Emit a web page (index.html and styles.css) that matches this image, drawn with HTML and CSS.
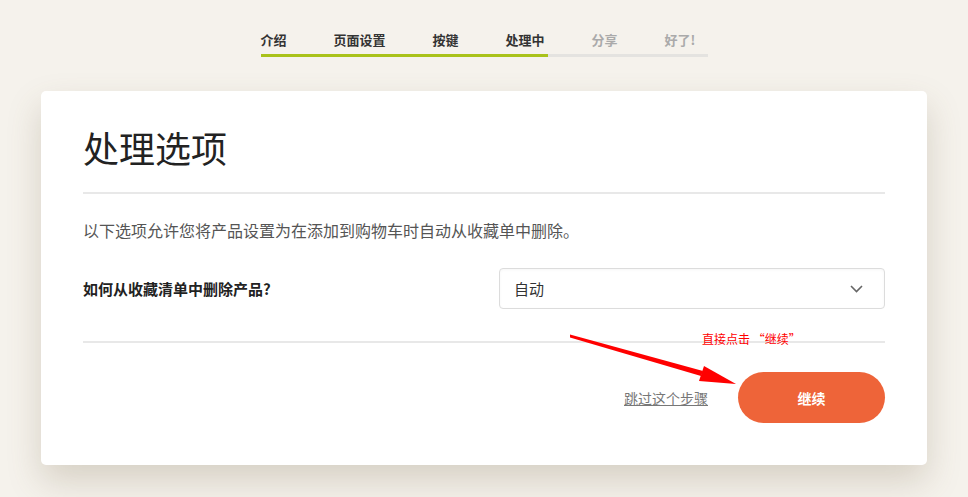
FILE: index.html
```html
<!DOCTYPE html>
<html lang="zh-CN">
<head>
<meta charset="utf-8">
<title>处理选项</title>
<link rel="stylesheet" href="styles.css">
</head>
<body>
<div class="page">
  <nav class="steps">
    <ul class="step-list">
      <li class="step done">介绍</li>
      <li class="step done">页面设置</li>
      <li class="step done">按键</li>
      <li class="step done">处理中</li>
      <li class="step todo">分享</li>
      <li class="step todo">好了!</li>
    </ul>
    <div class="track"><div class="fill" style="width:287px"></div></div>
  </nav>

  <section class="card">
    <h1 class="title">处理选项</h1>
    <hr class="rule">
    <p class="desc">以下选项允许您将产品设置为在添加到购物车时自动从收藏单中删除。</p>
    <div class="row">
      <label class="label">如何从收藏清单中删除产品?</label>
      <div class="select">
        <span>自动</span>
        <svg class="chev" width="13" height="8" viewBox="0 0 13 8"><polyline points="1,1 6.5,6.5 12,1" fill="none" stroke="#666" stroke-width="1.6"/></svg>
      </div>
    </div>
    <hr class="rule rule2">
    <div class="actions">
      <a class="skip" href="#">跳过这个步骤</a>
      <button class="btn">继续</button>
    </div>
    <span class="note">直接点击 “继续”</span>
  </section>

  <svg class="arrow" width="968" height="497" viewBox="0 0 968 497">
    <polygon points="570,334.5 570,337.5 701,376 703,371" fill="#f00"/>
    <polygon points="736,384 699,381 704,366" fill="#f00"/>
  </svg>
</div>
</body>
</html>
```
FILE: styles.css
```css
* { box-sizing: border-box; }
html, body { margin: 0; padding: 0; }
body {
  background: #f5f2ec;
  font-family: "Noto Sans CJK SC", "Liberation Sans", sans-serif;
  color: #333;
  width: 968px;
  height: 497px;
  overflow: hidden;
}
.page { position: relative; width: 968px; height: 497px; padding-top: 30px; }

.steps { width: 447px; margin: 0 auto; }
.step-list {
  list-style: none; margin: 0; padding: 0;
  display: flex; gap: 47px;
}
.step { font-size: 13px; font-weight: 700; line-height: 20px; white-space: nowrap; }
.step.done { color: #333; }
.step.todo { color: #aaa; }
.track { margin-top: 4px; height: 3px; background: #e4e3e0; }
.fill { height: 3px; background: #a9c21a; }

.card {
  position: relative;
  width: 886px;
  margin: 34px auto 0;
  background: #fff;
  border-radius: 5px;
  padding: 35px 42px 42px;
  box-shadow: 0 16px 34px rgba(110, 90, 60, 0.22);
}
.title {
  margin: 0;
  font-size: 36px;
  line-height: 43px;
  font-weight: 400;
  color: #222;
}
.rule { border: 0; height: 2px; background: #e8e8e8; margin: 23px 0 0; }
.desc { margin: 24px 0 0; font-size: 16px; line-height: 24px; color: #555; }
.row { display: flex; align-items: center; justify-content: space-between; margin-top: 26px; }
.label { font-size: 15px; font-weight: 700; color: #222; }
.select {
  width: 386px; height: 41px;
  border: 1px solid #dcdcdc; border-radius: 4px;
  display: flex; align-items: center; justify-content: space-between;
  padding: 0 21px 0 14px;
  font-size: 15px; color: #333;
  box-shadow: inset 0 1px 3px rgba(0,0,0,0.04);
}
.chev { display: block; }
.rule2 { margin-top: 32px; }
.actions { display: flex; align-items: center; justify-content: flex-end; gap: 30px; margin-top: 29px; }
.skip { font-size: 14px; color: #777; text-decoration: underline; }
.btn {
  width: 147px; height: 51px;
  border: 0; border-radius: 26px;
  background: #ee6439; color: #fff;
  font-family: inherit; font-size: 14px; font-weight: 700;
}
.note {
  position: absolute;
  left: 661px; top: 240px;
  font-size: 12px; line-height: 16px; color: #f00;
}
.arrow { position: absolute; left: 0; top: 0; pointer-events: none; }
```
